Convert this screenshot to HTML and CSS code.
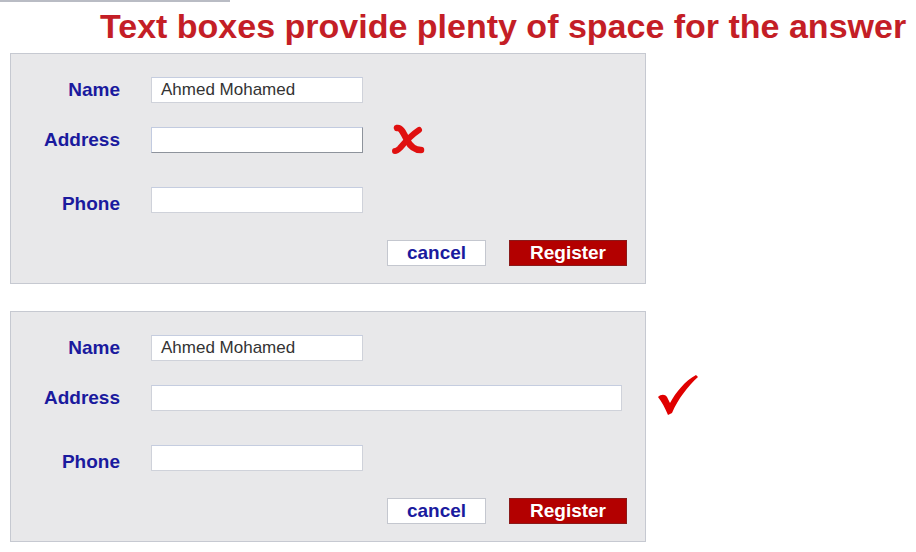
FILE: index.html
```html
<!DOCTYPE html>
<html>
<head>
<meta charset="utf-8">
<link rel="stylesheet" href="styles.css">
</head>
<body>
<div class="topline"></div>
<h1 class="title">Text boxes provide plenty of space for the answer</h1>

<div class="section first">
  <div class="panel">
    <div class="row r-name">
      <span class="label">Name</span>
      <div class="field">Ahmed Mohamed</div>
    </div>
    <div class="row r-address">
      <span class="label">Address</span>
      <div class="field focus"></div>
      <svg class="xmark" width="34" height="32" viewBox="0 0 34 32">
        <path d="M6 4 C10 3 13 10 16 16 C19 22 23 26 30 26" fill="none" stroke="#e01010" stroke-width="6.5" stroke-linecap="round"/>
        <path d="M28 6 C22 10 14 18 9 24 C7 26 5 27 4 27" fill="none" stroke="#e01010" stroke-width="6" stroke-linecap="round"/>
      </svg>
    </div>
    <div class="row r-phone">
      <span class="label low">Phone</span>
      <div class="field"></div>
    </div>
    <div class="buttons">
      <button class="btn cancel">cancel</button>
      <button class="btn register">Register</button>
    </div>
  </div>
</div>

<div class="section second">
  <div class="panel">
    <div class="row r-name">
      <span class="label">Name</span>
      <div class="field">Ahmed Mohamed</div>
    </div>
    <div class="row r-address">
      <span class="label">Address</span>
      <div class="field wide"></div>
    </div>
    <div class="row r-phone">
      <span class="label low">Phone</span>
      <div class="field"></div>
    </div>
    <div class="buttons">
      <button class="btn cancel">cancel</button>
      <button class="btn register">Register</button>
    </div>
  </div>
  <svg class="check" width="42" height="42" viewBox="0 0 42 42">
    <path d="M1 23 C4 20 8 20 10 23 L13 29 C19 18 28 7 39 1 L41 3 C31 12 21 25 15 39 L11 41 C8 34 5 28 1 23 Z" fill="#e00000"/>
  </svg>
</div>
</body>
</html>
```

FILE: styles.css
```css
html, body {
  margin: 0;
  padding: 0;
  background: #ffffff;
}

body {
  width: 916px;
  height: 552px;
  overflow: hidden;
  font-family: "Liberation Sans", Arial, sans-serif;
}

.topline {
  width: 230px;
  height: 2px;
  background: #b9bcc4;
}

.title {
  margin: 0;
  padding: 5px 0 0 100px;
  height: 38px;
  line-height: 38px;
  font-size: 34px;
  font-weight: bold;
  color: #c41e26;
  white-space: nowrap;
}

.section {
  display: flex;
  align-items: flex-start;
  padding-left: 10px;
}

.section.first {
  margin-top: 8px;
}

.section.second {
  margin-top: 27px;
}

.panel {
  width: 634px;
  background: #e8e8ea;
  border: 1px solid #c6c9d1;
  display: flex;
  flex-direction: column;
  padding: 23px 0 17px 0;
}

.row {
  display: flex;
  align-items: center;
  height: 26px;
}

.r-address {
  margin-top: 24px;
}

.r-phone {
  margin-top: 34px;
}

.label {
  width: 109px;
  text-align: right;
  font-size: 19px;
  font-weight: bold;
  color: #1a1a9e;
  margin-right: 31px;
}

.label.low {
  padding-top: 7px;
}

.field {
  box-sizing: border-box;
  width: 212px;
  height: 26px;
  background: #ffffff;
  border: 1px solid #cfd2da;
  border-top-color: #c5cde0;
  font-size: 17px;
  line-height: 24px;
  color: #333333;
  padding-left: 9px;
}

.field.focus {
  border-color: #c2cbe0 #8e939c #8e939c #c2cbe0;
}

.field.wide {
  width: 471px;
}

.xmark {
  margin-left: 28px;
}

.buttons {
  display: flex;
  justify-content: flex-end;
  gap: 23px;
  margin-top: 27px;
  padding-right: 18px;
}

.btn {
  box-sizing: border-box;
  height: 26px;
  font-family: "Liberation Sans", Arial, sans-serif;
  font-size: 19px;
  font-weight: bold;
  padding: 0;
  margin: 0;
  line-height: 24px;
}

.cancel {
  width: 99px;
  background: #ffffff;
  color: #1a1a9e;
  border: 1px solid #c4c7cf;
}

.register {
  width: 118px;
  background: #b30000;
  color: #ffffff;
  border: 1px solid #8a1a1a;
}

.check {
  margin-left: 11px;
  margin-top: 63px;
}
```
